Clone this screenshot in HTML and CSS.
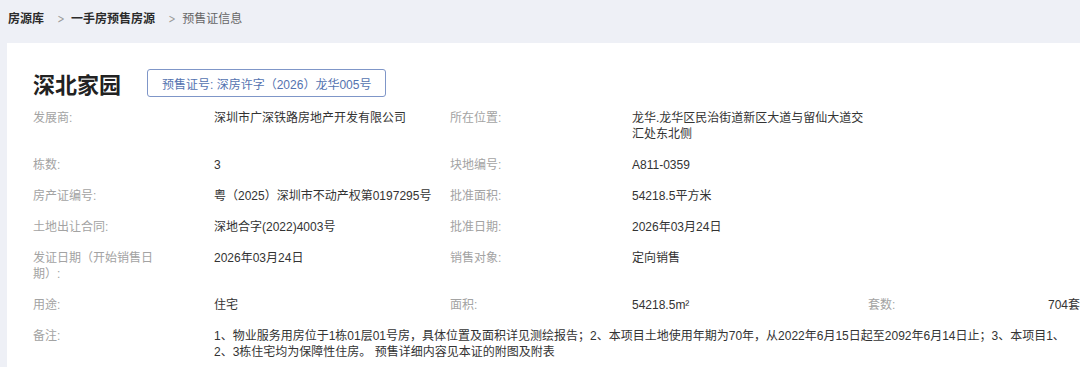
FILE: index.html
```html
<!DOCTYPE html>
<html lang="zh-CN">
<head>
<meta charset="utf-8">
<title>预售证信息</title>
<link rel="stylesheet" href="styles.css">
</head>
<body>
<div class="page">
  <nav class="crumbs">
    <span class="crumb strong">房源库</span>
    <span class="sep">&gt;</span>
    <span class="crumb strong">一手房预售房源</span>
    <span class="sep">&gt;</span>
    <span class="crumb current">预售证信息</span>
  </nav>
  <section class="card">
    <header class="head">
      <h1 class="title">深北家园</h1>
      <span class="badge">预售证号: 深房许字（2026）龙华005号</span>
    </header>
    <div class="rows">
      <div class="row">
        <span class="label">发展商:</span>
        <span class="value">深圳市广深铁路房地产开发有限公司</span>
        <span class="label">所在位置:</span>
        <span class="value">龙华.龙华区民治街道新区大道与留仙大道交汇处东北侧</span>
      </div>
      <div class="row">
        <span class="label">栋数:</span>
        <span class="value">3</span>
        <span class="label">块地编号:</span>
        <span class="value">A811-0359</span>
      </div>
      <div class="row">
        <span class="label">房产证编号:</span>
        <span class="value">粤（2025）深圳市不动产权第0197295号</span>
        <span class="label">批准面积:</span>
        <span class="value">54218.5平方米</span>
      </div>
      <div class="row">
        <span class="label">土地出让合同:</span>
        <span class="value">深地合字(2022)4003号</span>
        <span class="label">批准日期:</span>
        <span class="value">2026年03月24日</span>
      </div>
      <div class="row">
        <span class="label">发证日期（开始销售日期）:</span>
        <span class="value">2026年03月24日</span>
        <span class="label">销售对象:</span>
        <span class="value">定向销售</span>
      </div>
      <div class="row">
        <span class="label">用途:</span>
        <span class="value">住宅</span>
        <span class="label">面积:</span>
        <span class="value">54218.5m²</span>
        <span class="label">套数:</span>
        <span class="value">704套</span>
      </div>
      <div class="row">
        <span class="label">备注:</span>
        <span class="value remark">1、物业服务用房位于1栋01层01号房，具体位置及面积详见测绘报告；2、本项目土地使用年期为70年，从2022年6月15日起至2092年6月14日止；3、本项目1、2、3栋住宅均为保障性住房。 预售详细内容见本证的附图及附表</span>
      </div>
    </div>
  </section>
</div>
</body>
</html>
```

FILE: styles.css
```css
html, body {
  margin: 0;
  padding: 0;
  overflow: hidden;
  background: #eef0f6;
}

body {
  font-family: "Liberation Sans", "Noto Sans CJK SC", sans-serif;
  font-size: 12px;
  color: #333;
  width: 1080px;
  height: 367px;
}

.page {
  padding: 0 0 0 7px;
  width: 1073px;
  overflow: hidden;
}

.crumbs {
  height: 43px;
  display: flex;
  align-items: center;
  padding: 0 0 6px 1px;
  box-sizing: border-box;
  line-height: 16px;
}

.crumb.strong {
  font-weight: bold;
  color: #2b2b2b;
}

.crumb.current {
  color: #666;
}

.sep {
  color: #9a9a9a;
  margin: 0 5px 0 12px;
  font-family: "DejaVu Sans", sans-serif;
  font-size: 12px;
  transform: scaleX(0.7);
}

.card {
  width: 1200px;
  background: #fff;
  padding: 26px 0 12px 26px;
}

.head {
  display: flex;
  align-items: center;
  gap: 26px;
  height: 28px;
}

.title {
  margin: 0;
  font-size: 22px;
  line-height: 28px;
  font-weight: bold;
  color: #222;
  font-family: "Noto Sans CJK SC", sans-serif;
}

.badge {
  display: inline-flex;
  align-items: center;
  height: 28px;
  box-sizing: border-box;
  padding: 0 14px;
  border: 1px solid #7f96c8;
  border-radius: 3px;
  color: #5473b0;
  font-size: 12px;
}

.rows {
  display: flex;
  flex-direction: column;
  gap: 15px;
  margin-top: 13px;
  line-height: 16px;
}

.row {
  display: grid;
  grid-template-columns: 181px 236px 182px 236px 180px 236px;
}

.label {
  color: #a3a3a3;
  padding-right: 52px;
}

.value {
  color: #333;
}

.remark {
  grid-column: 2 / span 5;
  width: 852px;
}
```
